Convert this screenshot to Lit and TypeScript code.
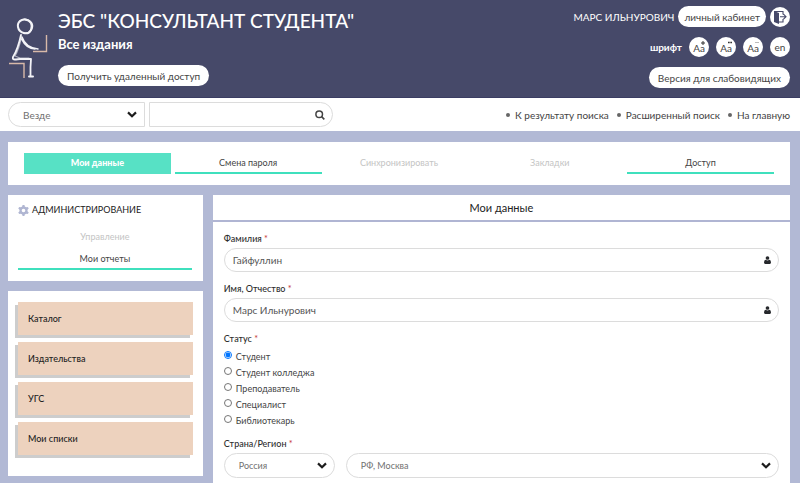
import { LitElement, html, css, svg } from "lit";
import { customElement, state } from "lit/decorators.js";
import { classMap } from "lit/directives/class-map.js";

interface Tab {
  label: string;
  kind: "active" | "link" | "muted";
}

const TABS: Tab[] = [
  { label: "Мои данные", kind: "active" },
  { label: "Смена пароля", kind: "link" },
  { label: "Синхронизировать", kind: "muted" },
  { label: "Закладки", kind: "muted" },
  { label: "Доступ", kind: "link" },
];

const QUICK_LINKS = ["К результату поиска", "Расширенный поиск", "На главную"];
const CATALOG = ["Каталог", "Издательства", "УГС", "Мои списки"];
const STATUSES = ["Студент", "Студент колледжа", "Преподаватель", "Специалист", "Библиотекарь"];

const chevron = html`<svg class="chevron" viewBox="0 0 10 7" aria-hidden="true">
  <path d="M1 1.4 5 5.2 9 1.4" fill="none" stroke="#1c1c1c" stroke-width="2.2" />
</svg>`;

const person = html`<svg class="person" viewBox="0 0 8 9" aria-hidden="true">
  <circle cx="4" cy="2.2" r="2.1" fill="#26282c" />
  <path d="M2 4.2Q4 5.8 6 4.2 8 4.3 8 7.4 8 9 6.6 9H1.4Q0 9 0 7.4 0 4.3 2 4.2Z" fill="#26282c" />
</svg>`;

const gearTeeth = [0, 60, 120, 180, 240, 300].map(
  (a) => svg`<path d="M4.4 2.4 5 0H7L7.6 2.4Z" transform="rotate(${a} 6 6)" fill="#b0b6d2" />`,
);

@customElement("app-root")
export class AppRoot extends LitElement {
  @state() private status = "Студент";

  static styles = css`
    :host {
      display: flex;
      flex-direction: column;
      min-height: 100vh;
      background: #b2b9d5;
      color: #444;
      font: 9px/16px Lato, "Open Sans", sans-serif;
    }
    * {
      box-sizing: border-box;
    }
    h1, h2, p, ul, fieldset {
      margin: 0;
      padding: 0;
      border: 0;
    }
    ul {
      list-style: none;
    }
    a {
      color: inherit;
      text-decoration: none;
    }
    button, input, select {
      font: inherit;
      color: inherit;
      margin: 0;
    }
    svg {
      display: block;
      flex: none;
    }
    header {
      display: flex;
      padding: 6px 10px 9px 8px;
      background: #464969;
      border-bottom: 1px solid #3b3d63;
      color: #fff;
    }
    .logo {
      width: 40px;
      height: 62px;
      margin: 11px 10px 0 0;
    }
    .brand {
      flex: 1;
      padding-top: 1px;
    }
    h1 {
      font-size: 19px;
      line-height: 27px;
      font-weight: 500;
    }
    .sub {
      font-size: 13px;
      line-height: 20px;
      font-weight: 700;
      margin-bottom: 11px;
    }
    .pill {
      height: 21px;
      padding: 0 9px;
      border: 0;
      border-radius: 11px;
      background: #fff;
      color: #444;
      font-size: 10px;
      line-height: 20px;
      white-space: nowrap;
    }
    .tools {
      display: flex;
      flex-direction: column;
      align-items: flex-end;
      gap: 10px;
      font-size: 10px;
    }
    .row {
      display: flex;
      align-items: center;
    }
    .user {
      gap: 4px;
    }
    .user .pill {
      padding: 0 6px;
    }
    .fonts {
      gap: 7px;
      font-weight: 700;
    }
    .round {
      position: relative;
      display: flex;
      align-items: center;
      justify-content: center;
      width: 20px;
      height: 20px;
      padding: 0;
      border: 0;
      border-radius: 50%;
      background: #fff;
      color: #444;
      font-size: 10px;
      font-weight: 400;
      line-height: 16px;
    }
    .size {
      padding-top: 2px;
    }
    .mark {
      position: absolute;
      top: 4px;
      right: 4px;
      width: 4px;
      height: 4px;
    }
    .exit {
      width: 14px;
      height: 14px;
    }
    .search {
      display: flex;
      align-items: center;
      justify-content: space-between;
      padding: 4px 10px 4px 8px;
      background: #fff;
    }
    .search form {
      display: flex;
      gap: 4px;
      flex: 0 1 325px;
    }
    .select, .field {
      position: relative;
      display: flex;
      align-items: center;
      height: 25px;
      border: 1px solid #dcdcdc;
      border-radius: 13px;
      background: #fff;
    }
    .select select, .field input {
      flex: 1;
      width: 100%;
      height: 100%;
      min-width: 0;
      border: 0;
      background: none;
      appearance: none;
      outline: none;
      padding: 0 14px;
      color: #707070;
    }
    .select .chevron, .field .person {
      position: absolute;
      right: 7px;
      pointer-events: none;
    }
    .chevron {
      width: 10px;
      height: 7px;
    }
    .person {
      width: 7px;
      height: 8px;
    }
    .scope {
      flex: 0 0 42%;
      border-radius: 13px 0 0 13px;
      font-size: 10px;
    }
    .query {
      flex: 1;
      border-radius: 0 13px 13px 0;
    }
    .go {
      flex: none;
      display: flex;
      align-items: center;
      justify-content: center;
      width: 24px;
      height: 23px;
      padding: 0;
      border: 0;
      background: none;
    }
    .go svg {
      width: 10px;
      height: 10px;
    }
    .links {
      display: flex;
      gap: 8px;
      font-size: 10px;
    }
    .links li {
      display: flex;
      align-items: center;
      gap: 5px;
    }
    .links li::before {
      content: "";
      width: 4px;
      height: 4px;
      border-radius: 50%;
      background: #666;
    }
    .page {
      flex: 1;
      display: grid;
      grid-template-columns: minmax(0, 27fr) minmax(0, 80fr);
      grid-template-rows: auto 1fr;
      gap: 10px;
      padding: 11px 10px 0 8px;
    }
    .panel {
      background: #fff;
    }
    .tabs {
      grid-column: 1 / -1;
      display: grid;
      grid-template-columns: repeat(5, 1fr);
      gap: 4px;
      padding: 11px 16px;
    }
    .tab {
      height: 21px;
      line-height: 20px;
      text-align: center;
    }
    .link {
      border-bottom: 2px solid #3fe0bd;
    }
    .active {
      background: #57e1c5;
      color: #fff;
      font-weight: 900;
    }
    .muted {
      color: #c4c4c4;
    }
    aside {
      display: flex;
      flex-direction: column;
      gap: 10px;
      min-width: 0;
    }
    .admin {
      padding: 7px 11px 11px 10px;
    }
    .admin .tab {
      display: block;
      height: 22px;
      line-height: 22px;
    }
    .admin h2 {
      display: flex;
      align-items: center;
      gap: 3px;
      font-size: 9px;
      line-height: 16px;
      font-weight: 400;
      color: #222;
      margin-bottom: 8px;
    }
    .gear {
      width: 11px;
      height: 11px;
    }
    .catalog {
      display: flex;
      flex-direction: column;
      gap: 7px;
      padding: 11px 10px 21px;
    }
    .catalog a {
      display: block;
      height: 33px;
      padding-left: 10px;
      line-height: 33px;
      background: #edd2be;
      box-shadow: -3px 3px 0 #cdcdcd;
      color: #222;
      font-weight: 500;
    }
    main {
      min-width: 0;
    }
    main h2 {
      height: 27px;
      border-bottom: 2px solid #b0b5d3;
      font-size: 11px;
      line-height: 25px;
      font-weight: 400;
      text-align: center;
      color: #222;
    }
    .form {
      padding: 8px 11px 5px;
    }
    .label, legend {
      display: block;
      padding: 0;
      line-height: 18px;
      font-weight: 500;
      color: #2e2e2e;
    }
    .req {
      color: #c63b3b;
    }
    .form .field {
      height: 24px;
      margin-bottom: 8px;
      font-size: 10px;
    }
    .field input {
      padding: 0 8px;
      color: #555;
    }
    fieldset {
      margin-bottom: 8px;
    }
    legend {
      line-height: 17px;
    }
    .radio {
      display: flex;
      gap: 4px;
      height: 16px;
      line-height: 20px;
    }
    .radio input {
      width: 8px;
      height: 8px;
      margin-top: 4px;
    }
    .region {
      display: grid;
      grid-template-columns: 20% minmax(0, 1fr);
      gap: 11px;
    }
  `;

  render() {
    return html`
      <header>
        <svg class="logo" viewBox="0 0 40 62" aria-hidden="true">
          <g fill="none" stroke="#f3f3f7" stroke-linecap="round" stroke-linejoin="round">
            <path d="M19 3C14 1 9 5 10 10 11 16 20 19 23 13 25 8 23 3 17 2.5" stroke-width="2" />
            <path d="M12 4C17 0 25 4 24.5 10 24 14 20 17 16 16" stroke-width="1.4" />
            <path d="M13 18C11.5 25 9.5 33 5 40 4 43.5 7 42.5 12 42L23 42 22.5 50 22.5 59" stroke-width="1.8" />
            <path d="M13.5 20C12 27 10 34 7 39L12 41 21 41" stroke-width="1.2" opacity=".6" />
            <path d="M14 20C16 26 21 31 30 32M13.5 22C17 29 21 32 27 32" stroke-width="1.5" />
            <path d="M21 59.5H25" stroke-width="2" />
          </g>
          <path d="M25 34.5H38.5V18M1 46.5H16V61" fill="none" stroke="#d8b9a9" stroke-width="1.4" />
        </svg>
        <div class="brand">
          <h1>ЭБС "КОНСУЛЬТАНТ СТУДЕНТА"</h1>
          <p class="sub">Все издания</p>
          <button class="pill">Получить удаленный доступ</button>
        </div>
        <div class="tools">
          <div class="row user">
            <span>МАРС ИЛЬНУРОВИЧ</span>
            <button class="pill">личный кабинет</button>
            <button class="round" aria-label="Выход">
              <svg class="exit" viewBox="0 0 14 14">
                <path d="M1 1 6 3V14L1 12Z" fill="#464969" />
                <path d="M1 1.5H10V4.5M10 9V12H6M7 6.7H13M10.5 4.2 13 6.7 10.5 9.2" fill="none" stroke="#464969" stroke-width="1.1" />
              </svg>
            </button>
          </div>
          <div class="row fonts">
            <span>шрифт</span>
            <button class="round size" aria-label="Увеличить шрифт">Aa
              <svg class="mark" viewBox="0 0 4 4"><path d="M2 0V4M0 2H4" stroke="#333" /></svg>
            </button>
            <button class="round size" aria-label="Обычный шрифт">Aa
              <svg class="mark" viewBox="0 0 4 4"><path d="M0 1.5H1.7M2.3 1.5H4" stroke="#333" stroke-width="1.6" /></svg>
            </button>
            <button class="round size" aria-label="Уменьшить шрифт">Aa
              <svg class="mark" viewBox="0 0 4 4"><path d="M0 1.5H4" stroke="#bbb" /></svg>
            </button>
            <button class="round">en</button>
          </div>
          <button class="pill">Версия для слабовидящих</button>
        </div>
      </header>

      <div class="search">
        <form @submit=${(e: Event) => e.preventDefault()}>
          <div class="select scope">
            <select aria-label="Область поиска"><option>Везде</option></select>
            ${chevron}
          </div>
          <div class="field query">
            <input type="text" aria-label="Поиск" />
            <button class="go" aria-label="Найти">
              <svg viewBox="0 0 10 10">
                <circle cx="4.2" cy="4.2" r="3.3" fill="none" stroke="#444" stroke-width="1.5" />
                <path d="M6.5 6.5 9.3 9.3" stroke="#444" stroke-width="1.7" />
              </svg>
            </button>
          </div>
        </form>
        <ul class="links">
          ${QUICK_LINKS.map((l) => html`<li><a href="#">${l}</a></li>`)}
        </ul>
      </div>

      <div class="page">
        <nav class="panel tabs">
          ${TABS.map((t) => html`<a href="#" class=${classMap({ tab: true, [t.kind]: true })}>${t.label}</a>`)}
        </nav>

        <aside>
          <section class="panel admin">
            <h2>
              <svg class="gear" viewBox="0 0 12 12" aria-hidden="true">
                <circle cx="6" cy="6" r="3.2" fill="none" stroke="#b0b6d2" stroke-width="2.4" />
                ${gearTeeth}
              </svg>
              АДМИНИСТРИРОВАНИЕ
            </h2>
            <a href="#" class="tab muted">Управление</a>
            <a href="#" class="tab link">Мои отчеты</a>
          </section>
          <nav class="panel catalog">
            ${CATALOG.map((c) => html`<a href="#">${c}</a>`)}
          </nav>
        </aside>

        <main class="panel">
          <h2>Мои данные</h2>
          <form class="form">
            <label class="label" for="surname">Фамилия <span class="req">*</span></label>
            <div class="field"><input id="surname" type="text" value="Гайфуллин" />${person}</div>
            <label class="label" for="name">Имя, Отчество <span class="req">*</span></label>
            <div class="field"><input id="name" type="text" value="Марс Ильнурович" />${person}</div>
            <fieldset>
              <legend>Статус <span class="req">*</span></legend>
              ${STATUSES.map(
                (s) => html`<label class="radio">
                  <input type="radio" name="status" .checked=${s === this.status} @change=${() => (this.status = s)} />${s}
                </label>`,
              )}
            </fieldset>
            <label class="label" for="country">Страна/Регион <span class="req">*</span></label>
            <div class="region">
              <div class="select">
                <select id="country"><option>Россия</option></select>${chevron}
              </div>
              <div class="select">
                <select aria-label="Регион"><option>РФ, Москва</option></select>${chevron}
              </div>
            </div>
          </form>
        </main>
      </div>
    `;
  }
}
